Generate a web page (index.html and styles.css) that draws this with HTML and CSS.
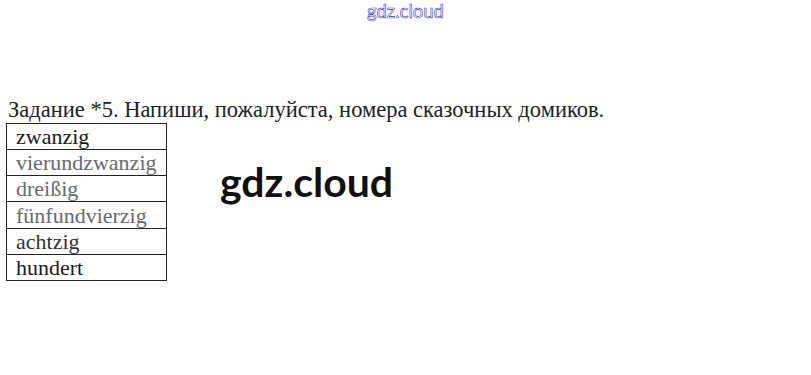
FILE: index.html
```html
<!DOCTYPE html>
<html lang="ru">
<head>
<meta charset="utf-8">
<link rel="stylesheet" href="styles.css">
</head>
<body>
<div class="page">
  <div class="site">gdz.cloud</div>
  <div class="task">
    <p class="title">Задание *5. Напиши, пожалуйста, номера сказочных домиков.</p>
    <table class="words">
      <tr><td>zwanzig</td></tr>
      <tr><td class="faded">vierundzwanzig</td></tr>
      <tr><td class="faded">dreißig</td></tr>
      <tr><td class="faded">fünfundvierzig</td></tr>
      <tr><td class="dim">achtzig</td></tr>
      <tr><td>hundert</td></tr>
    </table>
  </div>
  <div class="mark">gdz.cloud</div>
</div>
</body>
</html>
```
FILE: styles.css
```css
html, body {
  margin: 0;
  padding: 0;
  background: #fff;
}
.page {
  position: relative;
  width: 811px;
  height: 375px;
}
.site {
  text-align: center;
  font-family: Lato, "Open Sans", sans-serif;
  font-size: 18.5px;
  line-height: 22px;
  color: #fff;
  -webkit-text-stroke: 0.6px #3535d8;
}
.task {
  padding: 76px 0 0 6px;
}
.title {
  margin: 0 0 1px 2px;
  font-family: "Liberation Serif", "Times New Roman", serif;
  font-size: 22.5px;
  line-height: 24px;
  color: #222;
}
.words {
  border-collapse: collapse;
  width: 161px;
  height: 158px;
  font-family: "Liberation Serif", "Times New Roman", serif;
  font-size: 22px;
  color: #1a1a1a;
}
.words td {
  border: 1px solid #222;
  padding: 0 0 0 9px;
  line-height: 25px;
}
.words td.faded {
  color: #6a6a6a;
}
.words td.dim {
  color: #333;
}
.mark {
  position: absolute;
  left: 220px;
  top: 158px;
  font-family: Lato, sans-serif;
  font-weight: 700;
  font-size: 41px;
  line-height: 48px;
  color: #111;
}
```
